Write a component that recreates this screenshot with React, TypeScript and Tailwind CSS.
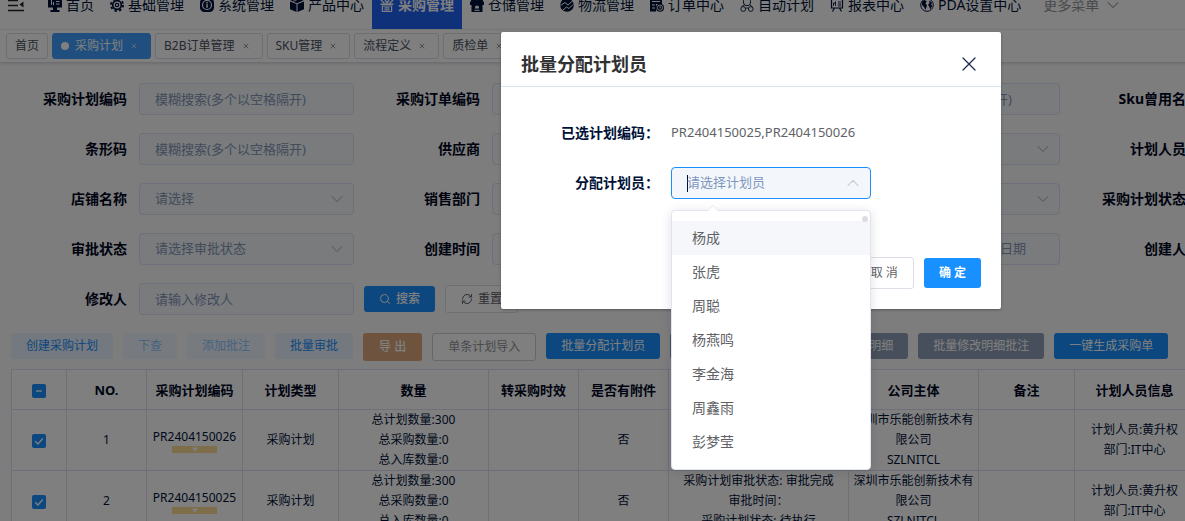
import type { ReactNode } from "react";
import { ChevronDown, ChevronUp, RefreshCw, Search, X } from "lucide-react";

const fontStack = "font-['Noto_Sans','Noto_Sans_CJK_SC',sans-serif]";

function Glyph({ children }: { children: ReactNode }) {
  return (
    <svg viewBox="0 0 14 14" className="size-3.5 shrink-0" fill="none" stroke="currentColor" strokeWidth="1.2" aria-hidden="true">
      {children}
    </svg>
  );
}

const icons = {
  home: (
    <Glyph>
      <path d="M0 0h14v9.5H0z M5 9.500h4v3H5z M2.500 12h9v2h-9z" fill="currentColor" stroke="none" />
      <path d="M3.500 2v5M5.500 4v3M8 3.500h3.500M8 6h3.500" stroke="#fff" strokeWidth="1" />
    </Glyph>
  ),
  gear: (
    <Glyph>
      <circle cx="7" cy="7" r="6" strokeWidth="2" strokeDasharray="2.350 2.360" />
      <circle cx="7" cy="7" r="4.300" strokeWidth="1.700" />
      <circle cx="7" cy="7" r="1.700" strokeWidth="1.300" />
    </Glyph>
  ),
  info: (
    <Glyph>
      <rect x="0" y="0" width="14" height="14" rx="4.500" fill="currentColor" stroke="none" />
      <circle cx="7" cy="7" r="4.500" stroke="#fff" />
      <path d="M7 6.300v3.400M7 4.100v1.300" stroke="#fff" strokeWidth="1.500" />
    </Glyph>
  ),
  box: (
    <Glyph>
      <path d="M7 0l6.500 2.600L7 5.200.5 2.600z M0 3.500l6.500 2.600V14L0 11.300z M14 3.500L7.500 6.100V14l6.500-2.700z" fill="currentColor" stroke="none" />
      <path d="M3 3.400l5-2.200" stroke="#fff" strokeWidth="0.800" />
    </Glyph>
  ),
  basket: (
    <Glyph>
      <path d="M1 2l4 4M13 2l-4 4M5 2l2 3 2-3M0.500 6.200h13" strokeWidth="1.400" />
      <path d="M2.400 8h9.200v5.500H2.400z" />
      <path d="M4.500 9.800h5M4.500 11.800h5" />
    </Glyph>
  ),
  store: (
    <Glyph>
      <path d="M2.500 0h9L14 4.500V7H0V4.500z M1.500 7h11v7h-11z" fill="currentColor" stroke="none" />
      <path d="M5 10.500v-1a2 2 0 0 1 4 0v1z" fill="#fff" stroke="none" />
      <path d="M4.500 12.300h5" stroke="#fff" strokeWidth="1" />
    </Glyph>
  ),
  globeArrow: (
    <Glyph>
      <circle cx="7" cy="7" r="6.800" fill="currentColor" stroke="none" />
      <path d="M0.500 7.500l4.500-3 3 2.500L13.500 2M3 12l3.500-3 2.500 1.500 4-4" stroke="#fff" strokeWidth="1" />
    </Glyph>
  ),
  orderClock: (
    <Glyph>
      <path d="M0 0h12v6H6v7.500H0z" fill="currentColor" stroke="none" />
      <path d="M2 3.500h8M2 7h3M2 10h3" stroke="#fff" strokeWidth="1" />
      <circle cx="10" cy="9.700" r="4" fill="currentColor" stroke="none" />
      <circle cx="10" cy="9.700" r="2.600" stroke="#fff" strokeWidth="0.900" />
      <path d="M10 8.300v1.600h1.200" stroke="#fff" strokeWidth="0.900" />
    </Glyph>
  ),
  team: (
    <Glyph>
      <path d="M3.500 5V2.500a3.500 2.500 0 0 1 7 0V5L9 7.500H5z" strokeWidth="0.900" />
      <path d="M4.500 6.500L1.500 9M9.500 6.500l3 2.500M5.500 11L7 9.500 8.500 11" strokeWidth="0.900" />
      <circle cx="3.200" cy="11" r="2.400" strokeWidth="0.900" />
      <circle cx="10.800" cy="11" r="2.400" strokeWidth="0.900" />
    </Glyph>
  ),
  board: (
    <Glyph>
      <path d="M0.600 1h12.800M1.500 1v9h11V1M4.500 10l-2 3.500M9.500 10l2 3.500" strokeWidth="1.200" />
      <path d="M3.500 7.800V5h2v2.800M5.500 5V3.500M8 4h3M8 6h3M8 7.900h3" strokeWidth="0.900" />
    </Glyph>
  ),
  globe: (
    <Glyph>
      <circle cx="7" cy="7" r="6.300" strokeWidth="1" />
      <path d="M2 3.500l2.500-1.500 2.200 1.200L5.500 5.500l1.500 2-1.500 4.500-1.500-3L2 7z M9 2.500l3 2-.8 2 1 1.500-2 3.500-1-3L8 7l1.500-2z" fill="currentColor" stroke="none" />
    </Glyph>
  ),
};

const menu: { label: string; icon: ReactNode; active?: boolean }[] = [
  { label: "首页", icon: icons.home },
  { label: "基础管理", icon: icons.gear },
  { label: "系统管理", icon: icons.info },
  { label: "产品中心", icon: icons.box },
  { label: "采购管理", icon: icons.basket, active: true },
  { label: "仓储管理", icon: icons.store },
  { label: "物流管理", icon: icons.globeArrow },
  { label: "订单中心", icon: icons.orderClock },
  { label: "自动计划", icon: icons.team },
  { label: "报表中心", icon: icons.board },
  { label: "PDA设置中心", icon: icons.globe },
];

function TopNav() {
  return (
    <header className="flex h-[29px] items-end overflow-hidden bg-white">
      <button type="button" aria-label="折叠菜单" className="flex h-12 w-10 items-center pl-2">
        <svg viewBox="0 0 16 14" className="h-3.5 w-4 text-[#222]" fill="none" stroke="currentColor" strokeWidth="1.500" aria-hidden="true">
          <path d="M0 2.500h10M0 7.500h10M0 12.500h16" />
          <path d="M15.500 3.500v6L11.500 6.500z" fill="currentColor" stroke="none" />
        </svg>
      </button>
      <nav className="flex h-12 text-sm text-[#001138]">
        {menu.map((m) => (
          <a
            key={m.label}
            href="#"
            className={
              m.active
                ? "flex items-center gap-1 bg-[#1f62f5] px-2 font-bold whitespace-nowrap text-white"
                : "flex items-center gap-1 px-2 whitespace-nowrap"
            }
          >
            {m.icon}
            {m.label}
          </a>
        ))}
        <button type="button" className="flex items-center gap-1 px-3.5 whitespace-nowrap text-[#909399]">
          更多菜单
          <ChevronDown className="size-5" strokeWidth={1.25} />
        </button>
      </nav>
    </header>
  );
}

const tabs = ["首页", "采购计划", "B2B订单管理", "SKU管理", "流程定义", "质检单"];

function TabBar() {
  return (
    <div className="flex h-[34px] items-center gap-1 border-t border-b border-t-[#ececec] border-b-[#d8dce5] bg-white px-1.5 text-xs text-[#495060] shadow-[0_1px_3px_0_rgba(0,0,0,0.12)]">
      {tabs.map((t) => {
        const active = t === "采购计划";
        return (
          <div
            key={t}
            className={
              active
                ? "flex h-[26px] items-center rounded-[3px] border border-[#409eff] bg-[#409eff] px-2 whitespace-nowrap text-white"
                : "flex h-[26px] items-center rounded-[3px] border border-[#d8dce5] bg-white px-2 whitespace-nowrap"
            }
          >
            {active && <span className="mr-1.5 size-2 rounded-full bg-white" />}
            <a href="#">{t}</a>
            {t !== "首页" && (
              <button type="button" aria-label={`关闭${t}`} className="ml-[3px] flex size-4 items-center justify-center">
                <X className="size-2 opacity-70" strokeWidth={2.5} />
              </button>
            )}
          </div>
        );
      })}
    </div>
  );
}

type Field = { label: string; kind: "text" | "select" | "range"; hint?: string };

const fuzzy = "模糊搜索(多个以空格隔开)";

const fields: Field[] = [
  { label: "采购计划编码", kind: "text", hint: fuzzy },
  { label: "采购订单编码", kind: "text", hint: fuzzy },
  { label: "Sku编码", kind: "text", hint: fuzzy },
  { label: "Sku曾用名", kind: "text", hint: fuzzy },
  { label: "条形码", kind: "text", hint: fuzzy },
  { label: "供应商", kind: "select", hint: "请选择" },
  { label: "计划类型", kind: "select", hint: "请选择" },
  { label: "计划人员", kind: "select", hint: "请选择" },
  { label: "店铺名称", kind: "select", hint: "请选择" },
  { label: "销售部门", kind: "select", hint: "请选择" },
  { label: "公司主体", kind: "select", hint: "请选择" },
  { label: "采购计划状态", kind: "select", hint: "请选择" },
  { label: "审批状态", kind: "select", hint: "请选择审批状态" },
  { label: "创建时间", kind: "range" },
  { label: "审批时间", kind: "range" },
  { label: "创建人", kind: "text", hint: "请输入创建人" },
  { label: "修改人", kind: "text", hint: "请输入修改人" },
];

const box = "h-8 w-full rounded border border-[#dcdff0] bg-[#f3f6fb] text-[13px]";

function FormField({ field, id }: { field: Field; id: string }) {
  return (
    <div className="flex items-center">
      <label htmlFor={id} className="w-[138px] shrink-0 pr-3 text-right text-sm font-bold whitespace-nowrap text-[#00071f]">
        {field.label}
      </label>
      <div className="grid min-w-0 flex-1 items-center">
        {field.kind === "text" && (
          <input id={id} type="text" placeholder={field.hint} className={`${box} px-[15px] placeholder:text-[#8396b5]`} />
        )}
        {field.kind === "select" && (
          <>
            <select id={id} className={`${box} col-start-1 row-start-1 appearance-none px-[15px] text-[#8396b5]`}>
              <option>{field.hint}</option>
            </select>
            <ChevronDown
              className="pointer-events-none col-start-1 row-start-1 mr-[7px] size-5 justify-self-end text-[#b4b8c2]"
              strokeWidth={1.25}
            />
          </>
        )}
        {field.kind === "range" && (
          <div className={`${box} flex items-center pr-5 pl-6`}>
            <input id={id} type="text" placeholder="开始日期" className="w-0 flex-1 text-center placeholder:text-[#8396b5]" />
            <span className="text-[#303133]">至</span>
            <input type="text" aria-label={`${field.label}结束日期`} placeholder="结束日期" className="w-0 flex-1 text-center placeholder:text-[#8396b5]" />
          </div>
        )}
      </div>
    </div>
  );
}

function SearchForm() {
  return (
    <form className="grid grid-cols-4 gap-y-[18px] pt-5 pr-[89px] pl-px">
      {fields.map((f, i) => (
        <FormField key={f.label} field={f} id={`field-${i}`} />
      ))}
      <div className="flex items-center gap-2.5 pl-2.5 text-xs">
        <button type="button" className="flex h-[26px] items-center gap-[5px] rounded-[3px] bg-[#1890ff] px-[15px] font-medium text-white">
          <Search className="size-3" strokeWidth={2} />
          搜索
        </button>
        <button type="button" className="flex h-7 items-center gap-[5px] rounded-[3px] border border-[#dcdfe6] bg-white px-[15px] text-[#606266]">
          <RefreshCw className="size-3" strokeWidth={2} />
          重置
        </button>
      </div>
    </form>
  );
}

const soft = "h-[26px] rounded-[3px] bg-[#e8f1ff] px-[15px] text-[#1890ff]";
const softOff = "h-[26px] rounded-[3px] bg-[#eef4fe] px-[15px] text-[#8cc8ff]";
const solid = "h-[26px] rounded-[3px] bg-[#1890ff] px-[15px] text-white";
const slate = "h-[26px] rounded-[3px] bg-[#909fb8] px-[15px] text-white";

const actions = [
  { label: "创建采购计划", style: soft },
  { label: "下查", style: softOff },
  { label: "添加批注", style: softOff },
  { label: "批量审批", style: soft },
  { label: "导 出", style: "h-7 rounded-[3px] bg-[#dda97c] px-4 font-medium text-white" },
  { label: "单条计划导入", style: "h-7 rounded-[3px] border border-[#cfcfcf] bg-white px-[15px] text-[#909399]" },
  { label: "批量分配计划员", style: solid },
  { label: "批量分配采购人员", style: slate },
  { label: "批量修改明细", style: slate },
  { label: "批量修改明细批注", style: slate },
  { label: "一键生成采购单", style: solid },
];

function Toolbar() {
  return (
    <div className="flex items-start gap-2.5 px-[11px] pt-[18px] pb-2 text-xs whitespace-nowrap">
      {actions.map((a) => (
        <button key={a.label} type="button" className={a.style}>
          {a.label}
        </button>
      ))}
    </div>
  );
}

function Check({ label, partial }: { label: string; partial?: boolean }) {
  return (
    <span className="inline-grid items-center justify-items-center align-middle">
      <input
        type="checkbox"
        aria-label={label}
        defaultChecked
        className="col-start-1 row-start-1 size-3.5 appearance-none rounded-xs bg-[#1890ff]"
      />
      <svg viewBox="0 0 14 14" className="pointer-events-none col-start-1 row-start-1 size-3.5" fill="none" stroke="#fff" strokeWidth="1.300" aria-hidden="true">
        <path d={partial ? "M4 7h6" : "M3.200 7.200l2.700 2.800 5-5.500"} />
      </svg>
    </span>
  );
}

const cell = "border border-[#dcdff0] px-1 text-center leading-5";

const columns: { title: string; width: string }[] = [
  { title: "NO.", width: "w-20" },
  { title: "采购计划编码", width: "w-24" },
  { title: "计划类型", width: "w-24" },
  { title: "数量", width: "w-[150px]" },
  { title: "转采购时效", width: "w-[90px]" },
  { title: "是否有附件", width: "w-[90px]" },
  { title: "状态", width: "w-[180px]" },
  { title: "公司主体", width: "w-[130px]" },
  { title: "备注", width: "w-24" },
  { title: "计划人员信息", width: "w-[120px]" },
  { title: "操作", width: "w-auto" },
];

const rows = [
  { no: 1, code: "PR2404150026" },
  { no: 2, code: "PR2404150025" },
];

function PlanTable() {
  return (
    <div className="px-[11px]">
      <table className="w-full table-fixed border-collapse bg-white text-xs text-[#001138]">
        <thead>
          <tr className="h-10 text-[13px] text-[#00071f]">
            <th className={`${cell} w-[55px]`}>
              <Check label="全选" partial />
            </th>
            {columns.map((c) => (
              <th key={c.title} className={`${cell} ${c.width} font-bold whitespace-nowrap`}>
                {c.title}
              </th>
            ))}
          </tr>
        </thead>
        <tbody>
          {rows.map((r) => (
            <tr key={r.no}>
              <td className={cell}>
                <Check label={`选择 ${r.code}`} />
              </td>
              <td className={cell}>{r.no}</td>
              <td className={cell}>
                <div className="flex flex-col items-center leading-[18px]">
                  <a href="#">{r.code}</a>
                  <svg viewBox="0 0 45 7" className="h-[7px] w-[45px]" aria-hidden="true">
                    <path d="M0 0h45v7H0z" fill="#fbdd92" />
                    <path d="M20 1.500h6l-3 4.500z" fill="#fff" />
                  </svg>
                </div>
              </td>
              <td className={cell}>采购计划</td>
              <td className={cell}>
                <p>总计划数量:300</p>
                <p>总采购数量:0</p>
                <p>总入库数量:0</p>
              </td>
              <td className={cell} />
              <td className={cell}>否</td>
              <td className={cell}>
                <p>采购计划审批状态: 审批完成</p>
                <p>审批时间：</p>
                <p>采购计划状态: 待执行</p>
              </td>
              <td className={cell}>
                <p>深圳市乐能创新技术有限公司</p>
                <p>SZLNITCL</p>
              </td>
              <td className={cell} />
              <td className={cell}>
                <p>计划人员:黄升权</p>
                <p>部门:IT中心</p>
              </td>
              <td className={cell}>
                <a href="#" className="text-[#1890ff]">
                  详情
                </a>
              </td>
            </tr>
          ))}
        </tbody>
      </table>
    </div>
  );
}

const planners = ["杨成", "张虎", "周聪", "杨燕鸣", "李金海", "周鑫雨", "彭梦莹"];

function PlannerSelect() {
  return (
    <div className="relative w-[200px]">
      <div className="flex h-8 items-center rounded border border-[#1890ff] bg-[#f3f6fb] pr-[7px] pl-[15px]">
        <span className="-mr-px h-[17px] w-px shrink-0 bg-[#001138]" />
        <input
          id="planner"
          role="combobox"
          aria-expanded="true"
          aria-controls="planner-list"
          type="text"
          placeholder="请选择计划员"
          className="min-w-0 flex-1 text-[13px] outline-none placeholder:text-[#7f96bb]"
        />
        <ChevronUp className="size-5 shrink-0 text-[#c0c4cc]" strokeWidth={1.25} />
      </div>
      <div className="absolute top-full left-0 z-20 mt-[11px] w-full rounded border border-[#dfe4f0] bg-white py-2.5 shadow-[0_2px_12px_0_rgba(0,0,0,0.12)]">
        <svg viewBox="0 0 12 7" className="absolute -top-1.5 left-[35px] h-[7px] w-3" aria-hidden="true">
          <path d="M0 6.500L6 .5l6 6" fill="#fff" stroke="#e4e9f3" />
          <path d="M.5 6h11v1H.5z" fill="#fff" />
        </svg>
        <span className="absolute top-[5px] right-0.5 size-1.5 rounded-full bg-[#dcdddf]" />
        <ul id="planner-list" role="listbox" className="text-sm text-[#606266]">
          {planners.map((p, i) => (
            <li
              key={p}
              role="option"
              aria-selected={false}
              className={i === 0 ? "h-[34px] bg-[#f5f7fa] px-5 leading-[34px]" : "h-[34px] px-5 leading-[34px]"}
            >
              {p}
            </li>
          ))}
        </ul>
      </div>
    </div>
  );
}

function AssignDialog() {
  return (
    <div className="absolute inset-0 z-10 flex items-start justify-center bg-black/50 pt-8">
      <section role="dialog" aria-modal="true" aria-labelledby="dialog-title" className="w-[500px] rounded-xs bg-white shadow-[0_1px_3px_rgba(0,0,0,0.3)]">
        <div className="flex h-[55px] items-center justify-between border-b border-[#dbe2f0] px-5 pt-2.5">
          <h2 id="dialog-title" className="text-lg font-bold text-[#303133]">
            批量分配计划员
          </h2>
          <button type="button" aria-label="关闭" className="flex size-6 items-center justify-center text-[#1b2a52]">
            <X className="size-7" strokeWidth={1.25} />
          </button>
        </div>
        <div className="flex flex-col gap-[18px] pt-[30px]">
          <div className="flex h-8 items-center">
            <span className="w-[170px] pr-3 text-right text-sm font-bold text-[#001138]">已选计划编码：</span>
            <span className="text-[13px] text-[#606266]">PR2404150025,PR2404150026</span>
          </div>
          <div className="flex h-8 items-center">
            <label htmlFor="planner" className="w-[170px] pr-3 text-right text-sm font-bold text-[#001138]">
              分配计划员：
            </label>
            <PlannerSelect />
          </div>
        </div>
        <div className="flex items-center justify-end gap-2.5 px-5 pt-[58px] pb-5 text-xs">
          <button type="button" className="h-8 rounded-[3px] border border-[#dcdfe6] bg-white px-[15px] text-[#606266]">
            取 消
          </button>
          <button type="button" className="h-[30px] rounded-[3px] bg-[#1890ff] px-[15px] font-bold text-white">
            确 定
          </button>
        </div>
      </section>
    </div>
  );
}

export default function App() {
  return (
    <div className={`h-screen overflow-hidden ${fontStack}`}>
      <div className="relative h-full min-w-[1502px] overflow-hidden bg-[#fafafa]">
        <TopNav />
        <TabBar />
        <main>
          <SearchForm />
          <Toolbar />
          <PlanTable />
        </main>
        <AssignDialog />
      </div>
    </div>
  );
}
